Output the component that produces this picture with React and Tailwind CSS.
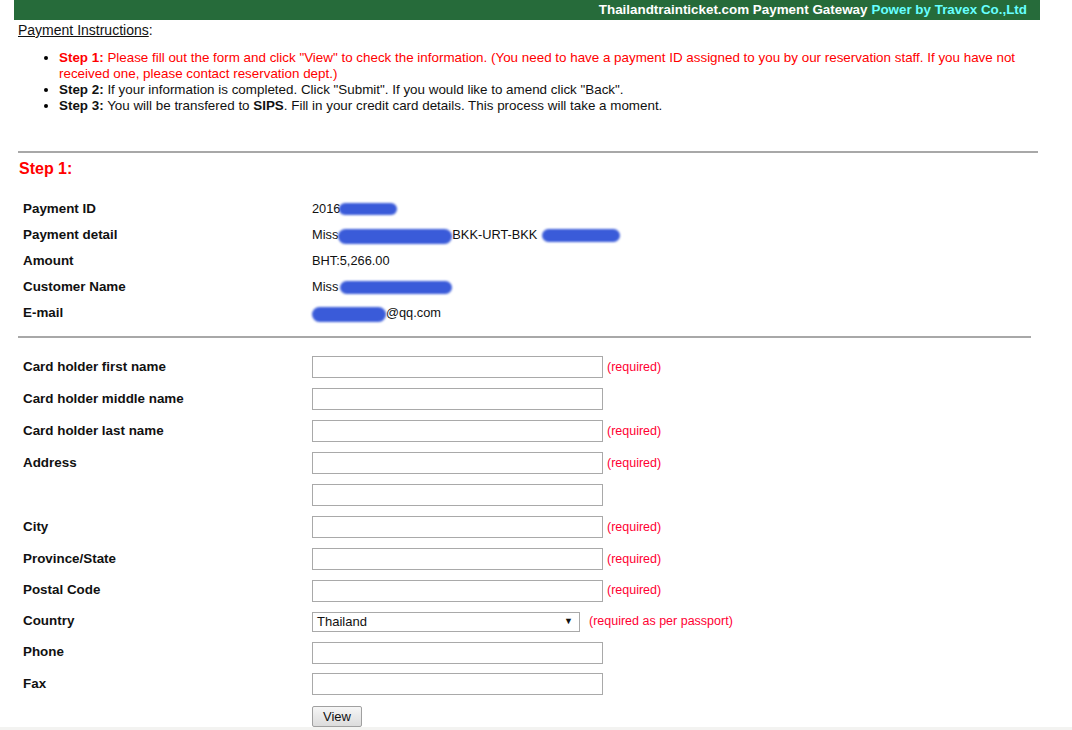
import React from 'react';

const font = { fontFamily: '"Liberation Sans", Arial, sans-serif' };

function Blob({ className }) {
  return <span className={`inline-block align-middle rounded-full bg-[#3a5bd9] blur-[1px] ${className}`} />;
}

function InfoRow({ label, children }) {
  return (
    <div className="flex items-center h-[26px]">
      <div className="w-[294px] pl-[5px] font-bold text-[13.4px] text-[#111]">{label}</div>
      <div className="flex items-center text-[12.8px] text-[#111]">{children}</div>
    </div>
  );
}

function FormRow({ label, required, extra, h = 'h-[32px]', children }) {
  return (
    <div className={`flex items-center ${h}`}>
      <div className="w-[294px] pl-[5px] font-bold text-[13.4px] text-[#111]">{label}</div>
      <div className="flex items-center">
        {children || <input type="text" className="w-[291px] h-[22px] border border-[#a9a9a9] bg-white outline-none" />}
        {required && <span className="ml-[4px] text-[12.5px] text-[#ff0033]">(required)</span>}
        {extra}
      </div>
    </div>
  );
}

export default function App() {
  return (
    <div className="min-h-screen bg-white" style={font}>
      <div className="ml-[14px] w-[1026px]">
        <div className="h-[20px] bg-[#266b3a] flex items-center justify-end pr-[13px] text-[13.4px] font-bold">
          <span className="text-white">Thailandtrainticket.com Payment Gateway</span>
          <span className="text-[#66ffff] ml-[4px]">Power by Travex Co.,Ltd</span>
        </div>

        <div className="pl-[4px] pt-[2px]">
          <div className="text-[14px] text-[#111] h-[16px] leading-[16px]">
            <span className="underline">Payment Instructions</span>:
          </div>
          <ul className="list-disc marker:text-black pl-[41px] mt-[12px] text-[13.4px] leading-[16px] text-[#111] pr-[4px]">
            <li className="text-[#ff0000]">
              <b>Step 1:</b> Please fill out the form and click "View" to check the information. (You need to have a payment ID assigned to you by our reservation staff. If you have not received one, please contact reservation dept.)
            </li>
            <li>
              <b>Step 2:</b> If your information is completed. Click "Submit". If you would like to amend click "Back".
            </li>
            <li>
              <b>Step 3:</b> You will be transfered to <b>SIPS</b>. Fill in your credit card details. This process will take a moment.
            </li>
          </ul>

          <div className="mt-[37px] border-t-2 border-[#a8a8a8] w-[1020px]" />

          <div className="mt-[7px] pl-[1px] text-[16px] font-bold text-[#ff0000] leading-[18px]">Step 1:</div>

          <div className="mt-[18px]">
            <InfoRow label="Payment ID">
              <span>2016</span>
              <Blob className="w-[58px] h-[12px] -ml-[1px]" />
            </InfoRow>
            <InfoRow label="Payment detail">
              <span>Miss</span>
              <Blob className="w-[114px] h-[15px] mt-[2px]" />
              <span>BKK-URT-BKK</span>
              <Blob className="w-[78px] h-[13px] ml-[5px]" />
            </InfoRow>
            <InfoRow label="Amount">
              <span>BHT:5,266.00</span>
            </InfoRow>
            <InfoRow label="Customer Name">
              <span>Miss</span>
              <Blob className="w-[112px] h-[13px] ml-[2px]" />
            </InfoRow>
            <InfoRow label="E-mail">
              <Blob className="w-[74px] h-[15px] mt-[3px]" />
              <span>@qq.com</span>
            </InfoRow>
          </div>

          <div className="mt-[10px] border-t-2 border-[#a8a8a8] w-[1013px]" />

          <div className="mt-[13px]">
            <FormRow label="Card holder first name" required />
            <FormRow label="Card holder middle name" />
            <FormRow label="Card holder last name" required />
            <FormRow label="Address" required />
            <FormRow label="" />
            <FormRow label="City" required />
            <FormRow label="Province/State" required />
            <FormRow label="Postal Code" required h="h-[31px]" />
            <FormRow
              label="Country"
              h="h-[31px]"
              extra={<span className="ml-[9px] text-[12.5px] text-[#ff0033]">(required as per passport)</span>}
            >
              <div className="relative w-[268px] h-[20px] border border-[#a9a9a9] bg-white flex items-center pl-[4px] text-[13px] text-[#111]">
                Thailand
                <span className="absolute right-[6px] top-[2px] text-[9px]">▼</span>
              </div>
            </FormRow>
            <FormRow label="Phone" h="h-[31px]" />
            <FormRow label="Fax" />
            <div className="flex items-center h-[32px]">
              <div className="w-[294px]" />
              <button className="w-[50px] h-[21px] border border-[#a0a0a0] rounded-[2px] bg-gradient-to-b from-[#f6f6f6] to-[#dcdcdc] text-[13px] text-[#111]">
                View
              </button>
            </div>
          </div>
        </div>
      </div>
      <div className="h-[40px] bg-[#f3f3f1] -mt-[5px]" />
    </div>
  );
}
